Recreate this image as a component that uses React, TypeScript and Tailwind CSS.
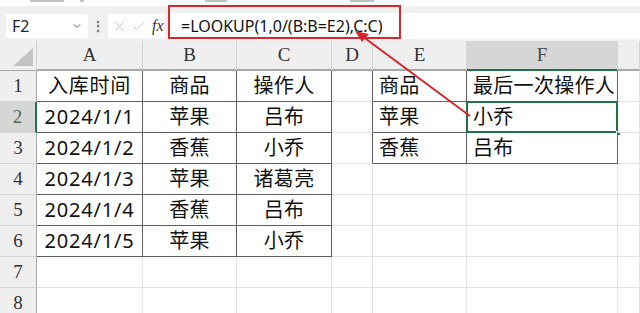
import React from 'react'
import { ChevronDown, X, Check } from 'lucide-react'

const cols = ['A', 'B', 'C', 'D', 'E', 'F', '']

const data: string[][] = [
  ['入库时间', '商品', '操作人', '', '商品', '最后一次操作人', ''],
  ['2024/1/1', '苹果', '吕布', '', '苹果', '小乔', ''],
  ['2024/1/2', '香蕉', '小乔', '', '香蕉', '吕布', ''],
  ['2024/1/3', '苹果', '诸葛亮', '', '', '', ''],
  ['2024/1/4', '香蕉', '吕布', '', '', '', ''],
  ['2024/1/5', '苹果', '小乔', '', '', '', ''],
  ['', '', '', '', '', '', ''],
  ['', '', '', '', '', '', ''],
]

const cjk = "font-['Noto_Sans','Noto_Sans_CJK_SC',sans-serif]"
const serif = "font-['Liberation_Serif','Noto_Sans_CJK_SC',serif]"

function cellClass(r: number, c: number) {
  const inLeft = r <= 5 && c <= 2
  const inRight = r <= 2 && (c === 4 || c === 5)
  const dRight = r <= 2 && c === 3
  let cls = 'border-b border-r '
  if (inLeft || inRight) cls += 'border-[#5f5f5f] '
  else if (dRight) cls += 'border-b-[#e3e3e3] border-r-[#5f5f5f] '
  else cls += 'border-[#e3e3e3] '
  if (c <= 2) cls += 'justify-center '
  else cls += 'justify-start pl-[6px] '
  return cls
}

function Sheet() {
  return (
    <div className="grid grid-cols-[37px_106px_94px_95px_41px_94px_151px_1fr] grid-rows-[30px_31px_31px_31px_31px_31px_31px_31px_31px] bg-white">
      <div className="relative bg-[#efefef] border-r border-b border-r-[#d0d0d0] border-b-[#a8a8a8]">
        <div className="absolute right-[3px] bottom-[4px] w-0 h-0 border-l-[20px] border-l-transparent border-b-[18px] border-b-[#c3c3c3]" />
      </div>
      {cols.map((c, i) => (
        <div
          key={i}
          className={`flex items-center justify-center border-r border-b-2 border-r-[#d4d4d4] ${serif} text-[19px] ${
            c === 'F' ? 'bg-[#d6d6d6] border-b-[#217346] text-[#4a4a4a]' : 'bg-[#efefef] border-b-[#a8a8a8] text-[#333]'
          }`}
        >
          {c}
        </div>
      ))}
      {data.map((row, r) => (
        <React.Fragment key={r}>
          <div
            className={`flex items-center justify-center border-b border-b-[#d4d4d4] ${serif} text-[19px] ${
              r === 1 ? 'bg-[#d6d6d6] border-r-2 border-r-[#217346] text-[#4f6b58]' : 'bg-[#efefef] border-r border-r-[#a8a8a8] text-[#333]'
            }`}
          >
            {r + 1}
          </div>
          {row.map((v, c) => (
            <div
              key={c}
              className={`relative flex items-center whitespace-nowrap ${cellClass(r, c)} ${cjk} text-[20px] text-[#111] ${
                c === 0 ? 'tracking-[0.8px]' : 'tracking-[0.3px]'
              }`}
            >
              {v}
              {r === 1 && c === 5 && (
                <>
                  <div className="absolute -left-px -top-px -right-px -bottom-px border-2 border-[#217346] pointer-events-none" />
                  <div className="absolute -right-[4px] -bottom-[4px] w-[5px] h-[5px] bg-[#217346] border border-white" />
                </>
              )}
            </div>
          ))}
        </React.Fragment>
      ))}
    </div>
  )
}

function FormulaBar() {
  return (
    <div className="relative bg-[#f0f0f0] h-[41px] flex flex-col">
      {/* bottom edge of the ribbon, cut off */}
      <div className="h-[6px] bg-white relative">
        <div className="absolute left-[30px] top-0 w-[34px] h-[2px] bg-[#9a9a9a] opacity-60" />
        <div className="absolute left-[80px] top-0 w-[4px] h-[2px] bg-[#9a9a9a] opacity-60" />
        <div className="absolute left-[205px] top-0 w-[22px] h-[2px] bg-[#9a9a9a] opacity-60" />
        <div className="absolute left-[350px] top-0 w-[24px] h-[2px] bg-[#9a9a9a] opacity-60" />
      </div>
      <div className="flex items-center h-[28px] mt-[6px] pl-[6px]">
        <div className="flex items-center justify-between bg-white rounded-[3px] w-[82px] h-[24px] pl-[6px] pr-[5px]">
          <span className={`${cjk} text-[16px] text-[#222]`}>F2</span>
          <ChevronDown size={12} className="text-[#666]" strokeWidth={2} />
        </div>
        <div className="w-[20px] flex justify-center text-[#777] text-[14px] font-bold leading-none">⋮</div>
        <div className="flex items-center bg-white h-[24px] w-[57px] pl-[4px] gap-[4px]">
          <X size={15} className="text-[#c4c4c4]" strokeWidth={1.5} />
          <Check size={15} className="text-[#c4c4c4]" strokeWidth={1.5} />
          <span className="font-['Liberation_Serif',serif] italic text-[16px] text-[#333] ml-[2px]">fx</span>
        </div>
        <div className="flex-1 h-[26px] ml-[3px] bg-white flex items-center pl-[13px]">
          <span className={`${cjk} text-[16px] text-[#111]`}>=LOOKUP(1,0/(B:B=E2),C:C)</span>
        </div>
      </div>
      <div className="absolute left-[168px] top-[5px] w-[233px] h-[34px] border-2 border-[#d3282d]" />
    </div>
  )
}

export default function App() {
  return (
    <div className="relative w-[640px] h-[313px] overflow-hidden bg-white">
      <FormulaBar />
      <Sheet />
      <svg className="absolute inset-0 pointer-events-none" width="640" height="313">
        <line x1="470" y1="116" x2="362" y2="36" stroke="#d6262b" strokeWidth="2" />
        <polygon points="355,31 369,34 362,42" fill="#d6262b" />
      </svg>
    </div>
  )
}
